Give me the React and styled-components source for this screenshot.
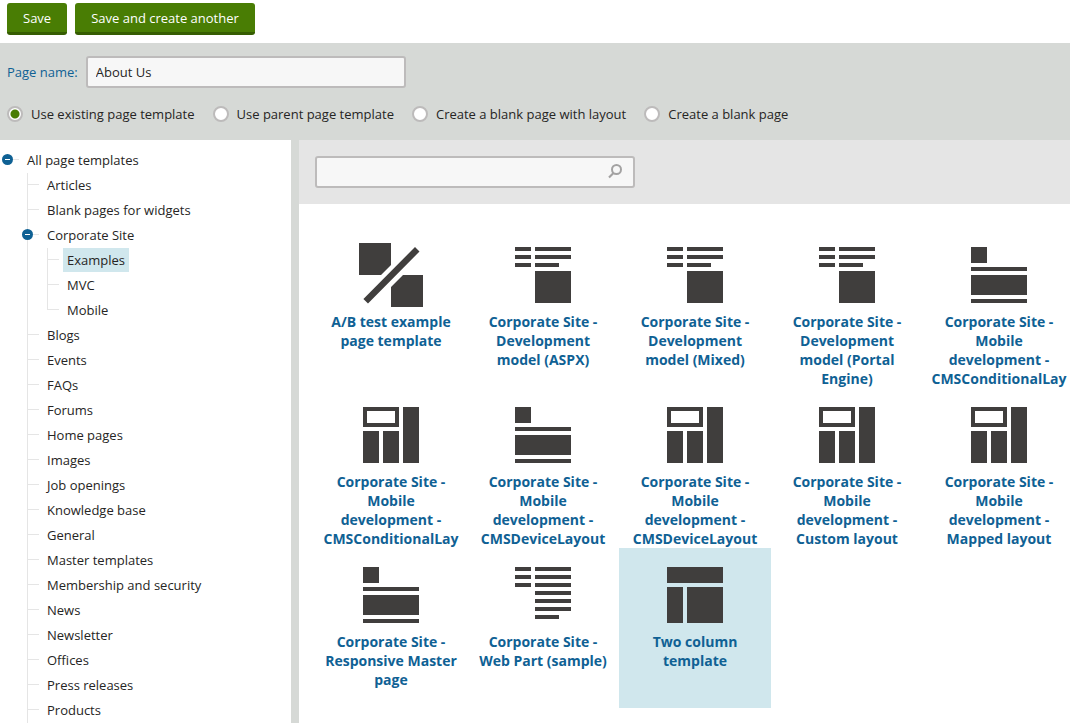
import React, { useState } from "react";
import styled, { createGlobalStyle } from "styled-components";

const color = {
  green: "#497d04",
  greenDark: "#365d02",
  blue: "#0f6194",
  select: "#d0e7ed",
  ink: "#262524",
  icon: "#403e3d",
  bar: "#d6d9d6",
  panel: "#e5e5e5",
  border: "#bdbbbb",
  field: "#f7f7f7",
};

const GlobalStyle = createGlobalStyle`
  *, *::before, *::after { box-sizing: border-box; }
  body {
    margin: 0;
    background: #fff;
    color: ${color.ink};
    font: 13px/20px "Open Sans", "Noto Sans", sans-serif;
  }
  button, input { font: inherit; color: inherit; }
`;

const Page = styled.div`
  display: flex;
  flex-direction: column;
  min-height: 100vh;
`;

const Toolbar = styled.div`
  display: flex;
  gap: 8px;
  padding: 3px 7px 8px;
`;

const ActionButton = styled.button`
  height: 32px;
  padding: 1px 16px 0;
  line-height: 28px;
  border: 0;
  border-bottom: 3px solid ${color.greenDark};
  border-radius: 3px;
  background: ${color.green};
  color: #fff;
  white-space: nowrap;
  cursor: pointer;
`;

const Settings = styled.form`
  display: flex;
  flex-direction: column;
  gap: 16px;
  padding: 13px 7px 16px;
  background: ${color.bar};
`;

const NameRow = styled.div`
  display: flex;
  align-items: center;
  gap: 8px;
`;

const NameLabel = styled.label`
  color: ${color.blue};
`;

const TextField = styled.input`
  width: 320px;
  height: 32px;
  padding: 0 8px;
  border: 2px solid ${color.border};
  border-radius: 3px;
  background: ${color.field};
  outline: none;
`;

const Options = styled.div`
  display: flex;
  flex-wrap: wrap;
  gap: 18px;
`;

const Option = styled.label`
  display: flex;
  align-items: center;
  gap: 8px;
`;

const Radio = styled.input`
  appearance: none;
  width: 16px;
  height: 16px;
  margin: 0;
  border: 2px solid ${color.border};
  border-radius: 50%;
  background: #fff;
  &:checked {
    background: radial-gradient(circle, ${color.green} 4px, #fff 5px);
  }
`;

const Body = styled.div`
  display: flex;
  flex: 1;
`;

const Sidebar = styled.nav`
  flex: none;
  width: 299px;
  padding: 8px 0 0 7px;
  border-right: 8px solid ${color.bar};
`;

const TreeList = styled.ul`
  margin: 0;
  padding: 0;
  list-style: none;
`;

const TreeItem = styled.li`
  padding-left: 20px;
  background-image: linear-gradient(${color.panel}, ${color.panel}),
    linear-gradient(${color.panel}, ${color.panel});
  background-repeat: no-repeat;
  background-position: 0 11px, 0 0;
  background-size: 12px 1px,
    ${(p) => (p.$root ? "0 0" : p.$last ? "1px 12px" : "1px 100%")};
`;

const TreeRow = styled.div`
  display: flex;
  height: 25px;
  margin-left: -25px;
`;

const ToggleSlot = styled.span`
  width: 21px;
  padding-top: 6px;
`;

const Toggle = styled.button`
  display: block;
  width: 11px;
  height: 11px;
  padding: 0;
  border: 0;
  background: none;
  cursor: pointer;
  svg { display: block; }
`;

const TreeLink = styled.a`
  height: 24px;
  padding: 0 4px;
  line-height: 24px;
  background: ${(p) => (p.$selected ? color.select : "transparent")};
  color: inherit;
  text-decoration: none;
  white-space: nowrap;
`;

const Main = styled.main`
  flex: 1;
  min-width: 0;
  overflow: hidden;
`;

const SearchBar = styled.div`
  padding: 16px;
  background: ${color.panel};
`;

const SearchBox = styled.div`
  display: flex;
  align-items: center;
  width: 320px;
  height: 32px;
  padding-right: 10px;
  border: 2px solid ${color.border};
  border-radius: 3px;
  background: ${color.field};
`;

const SearchInput = styled.input`
  flex: 1;
  min-width: 0;
  height: 28px;
  padding: 0 8px;
  border: 0;
  background: none;
  outline: none;
`;

const SearchButton = styled.button`
  width: 16px;
  height: 16px;
  padding: 0;
  border: 0;
  background: none;
  cursor: pointer;
  svg { display: block; }
`;

const Gallery = styled.div`
  display: grid;
  grid-template-columns: repeat(5, 152px);
  grid-auto-rows: 160px;
  padding: 24px 0 15px 16px;
`;

const Tile = styled.button`
  display: flex;
  flex-direction: column;
  align-items: center;
  gap: 5px;
  padding: 15px 8px 0;
  border: 0;
  background: ${(p) => (p.$selected ? color.select : "transparent")};
  color: ${color.blue};
  font-size: 14px;
  font-weight: 700;
  line-height: 19px;
  cursor: pointer;
`;

const TileIcon = styled.svg`
  flex: none;
  display: block;
  fill: ${color.icon};
`;

const TileLabel = styled.span`
  text-align: center;
`;

const shapes = {
  ab: "M0 0h32v22L22 32H0zM32 44L44 32H64V64H32zM56 4L60.500 8.500L9 60.500L4.400 56z",
  article: "M4 8h16v4H4zM24 8h36v4H24zM4 16h16v4H4zM24 16h36v4H24zM4 24h16v4H4zM24 24h24v4H24zM24 32h36v32H24z",
  bands: "M4 8h16v16H4zM4 28h56v4H4zM4 36h56v20H4zM4 60h56v4H4z",
  blocks: "M4 8h36v20H4zM8 12v12h28V12zM44 8h16v56H44zM4 32h16v32H4zM24 32h16v32H24z",
  text: "M4 8h16v4H4zM24 8h36v4H24zM4 16h16v4H4zM24 16h36v4H24zM4 24h16v4H4zM24 24h36v4H24zM24 32h36v4H24zM24 40h36v4H24zM24 48h36v4H24zM24 56h24v4H24z",
  columns: "M4 8h56v16H4zM4 28h16v36H4zM24 28h36v36H24z",
};

function TemplateIcon({ name }) {
  return (
    <TileIcon
      width="64"
      height="64"
      viewBox={name === "ab" ? "0 0 64 64" : "0 4 64 64"}
      shapeRendering={name === "ab" ? "auto" : "crispEdges"}
      aria-hidden="true"
    >
      <path d={shapes[name]} fillRule="evenodd" />
    </TileIcon>
  );
}

const options = [
  "Use existing page template",
  "Use parent page template",
  "Create a blank page with layout",
  "Create a blank page",
];

const tree = {
  label: "All page templates",
  children: [
    { label: "Articles" },
    { label: "Blank pages for widgets" },
    {
      label: "Corporate Site",
      children: [{ label: "Examples" }, { label: "MVC" }, { label: "Mobile", last: true }],
    },
    ...[
      "Blogs", "Events", "FAQs", "Forums", "Home pages", "Images",
      "Job openings", "Knowledge base", "General", "Master templates",
      "Membership and security", "News", "Newsletter", "Offices",
      "Press releases", "Products",
    ].map((label) => ({ label })),
  ],
};

const templates = [
  ["ab", "A/B test example page template"],
  ["article", "Corporate Site - Development model (ASPX)"],
  ["article", "Corporate Site - Development model (Mixed)"],
  ["article", "Corporate Site - Development model (Portal Engine)"],
  ["bands", "Corporate Site - Mobile development - CMSConditionalLay"],
  ["blocks", "Corporate Site - Mobile development - CMSConditionalLay"],
  ["bands", "Corporate Site - Mobile development - CMSDeviceLayout"],
  ["blocks", "Corporate Site - Mobile development - CMSDeviceLayout"],
  ["blocks", "Corporate Site - Mobile development - Custom layout"],
  ["blocks", "Corporate Site - Mobile development - Mapped layout"],
  ["bands", "Corporate Site - Responsive Master page"],
  ["text", "Corporate Site - Web Part (sample)"],
  ["columns", "Two column template"],
];

function TreeNode({ node, root, selected, onSelect }) {
  const [open, setOpen] = useState(true);
  return (
    <TreeItem $root={root} $last={node.last}>
      <TreeRow>
        <ToggleSlot>
          {node.children && (
            <Toggle type="button" aria-label="Toggle" aria-expanded={open} onClick={() => setOpen(!open)}>
              <svg width="11" height="11" viewBox="0 0 11 11">
                <circle cx="5.500" cy="5.500" r="5.500" fill={color.blue} />
                <path d={open ? "M3 5h5v1H3z" : "M3 5h5v1H3zM5 3h1v5H5z"} fill="#fff" />
              </svg>
            </Toggle>
          )}
        </ToggleSlot>
        <TreeLink
          href="#"
          $selected={selected === node.label}
          onClick={(e) => {
            e.preventDefault();
            onSelect(node.label);
          }}
        >
          {node.label}
        </TreeLink>
      </TreeRow>
      {node.children && open && (
        <TreeList>
          {node.children.map((child) => (
            <TreeNode key={child.label} node={child} selected={selected} onSelect={onSelect} />
          ))}
        </TreeList>
      )}
    </TreeItem>
  );
}

export default function App() {
  const [category, setCategory] = useState("Examples");
  const [template, setTemplate] = useState(12);
  return (
    <Page>
      <GlobalStyle />
      <Toolbar>
        <ActionButton type="button">Save</ActionButton>
        <ActionButton type="button">Save and create another</ActionButton>
      </Toolbar>
      <Settings>
        <NameRow>
          <NameLabel htmlFor="page-name">Page name:</NameLabel>
          <TextField id="page-name" type="text" defaultValue="About Us" />
        </NameRow>
        <Options>
          {options.map((label, i) => (
            <Option key={label}>
              <Radio type="radio" name="source" defaultChecked={i === 0} />
              {label}
            </Option>
          ))}
        </Options>
      </Settings>
      <Body>
        <Sidebar>
          <TreeList>
            <TreeNode node={tree} root selected={category} onSelect={setCategory} />
          </TreeList>
        </Sidebar>
        <Main>
          <SearchBar>
            <SearchBox>
              <SearchInput type="text" aria-label="Search templates" />
              <SearchButton type="button" aria-label="Search">
                <svg width="16" height="16" viewBox="0 0 16 16" fill="none" stroke="#a3a2a2" strokeWidth="2">
                  <circle cx="9.500" cy="5.500" r="4.500" />
                  <path d="M6.500 9L2 13.500" strokeWidth="2.200" />
                </svg>
              </SearchButton>
            </SearchBox>
          </SearchBar>
          <Gallery>
            {templates.map(([icon, label], i) => (
              <Tile key={i} type="button" $selected={i === template} onClick={() => setTemplate(i)}>
                <TemplateIcon name={icon} />
                <TileLabel>{label}</TileLabel>
              </Tile>
            ))}
          </Gallery>
        </Main>
      </Body>
    </Page>
  );
}
